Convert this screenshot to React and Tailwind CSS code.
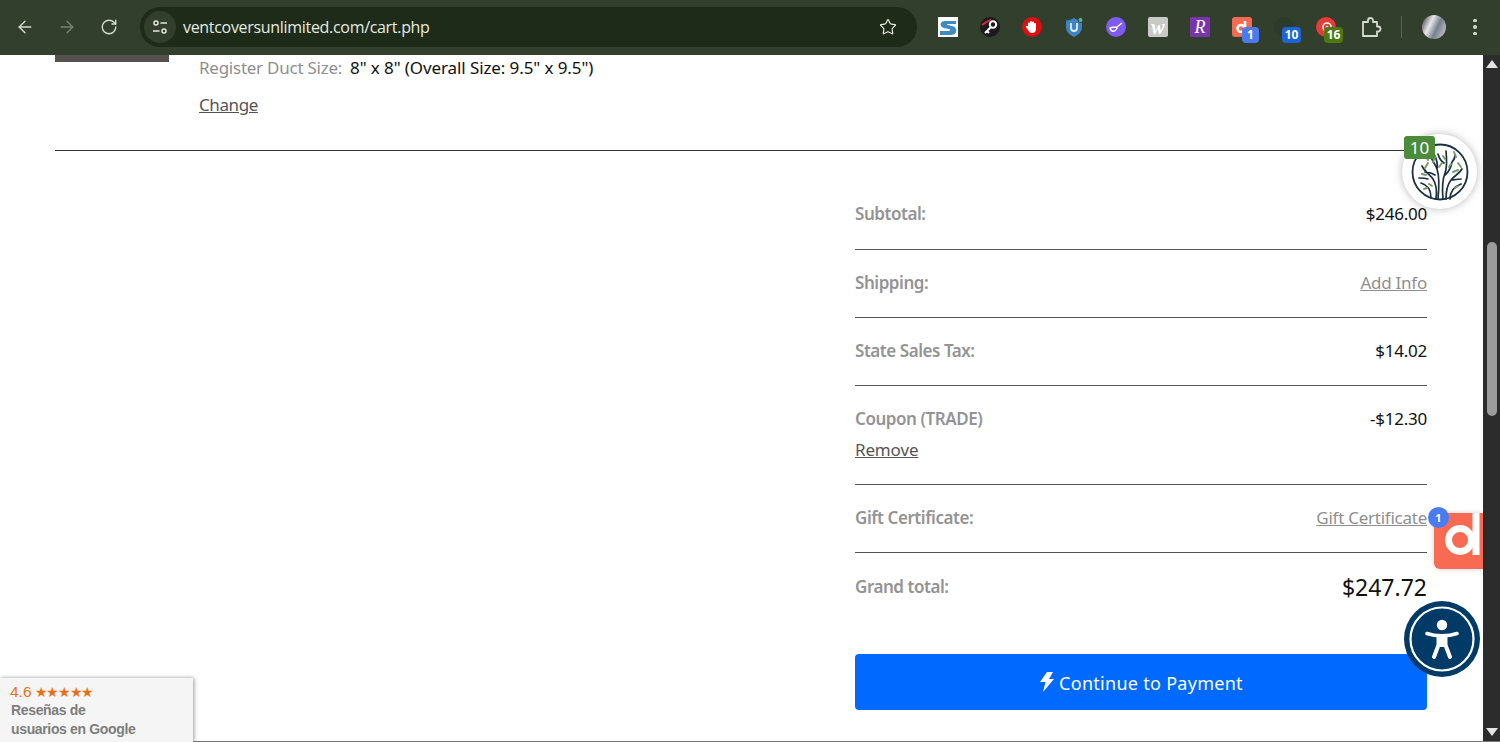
import React from "react";
import { ArrowLeft, ArrowRight, RotateCw, Star } from "lucide-react";

const Badge = ({ children, bg, className }) => (
  <span className={`absolute flex h-[16px] items-center justify-center rounded-[4px] text-[12px] font-bold leading-none text-white ${bg} ${className}`} style={{ fontFamily: "'Open Sans', sans-serif" }}>
    {children}
  </span>
);

function ChromeBar() {
  return (
    <header className="flex h-[55px] shrink-0 items-center bg-[#333f2d] pb-[1px] text-[#dfe5da]" style={{ fontFamily: "'Open Sans', sans-serif" }}>
      <div className="flex w-[140px] shrink-0 items-center gap-[22px] pl-[15px]">
        <ArrowLeft size={20} strokeWidth={1.6} className="text-[#d5dccf]" />
        <ArrowRight size={20} strokeWidth={1.6} className="text-[#79846f]" />
        <RotateCw size={18} strokeWidth={1.8} className="ml-[1px] text-[#d5dccf]" />
      </div>
      <div className="flex h-[40px] w-[777px] shrink-0 items-center rounded-full bg-[#1d2b18] pl-[4px] pr-[20px]">
        <div className="flex h-[32px] w-[32px] items-center justify-center rounded-full bg-[#333f2d]">
          <svg width="18" height="18" viewBox="0 0 18 18" fill="none" stroke="#e2e7dd" strokeWidth="1.5">
            <circle cx="5" cy="5" r="2" />
            <path d="M9.5 5H16M2 13h6.5" />
            <circle cx="13" cy="13" r="2" />
          </svg>
        </div>
        <span className="ml-[7px] flex-1 text-[16px] tracking-[-0.31px] text-[#e6eae2]">ventcoversunlimited.com/cart.php</span>
        <Star size={18} strokeWidth={1.6} className="text-[#e6eae2]" />
      </div>
      <div className="ml-[21px] flex items-center gap-[22px]">
        <svg width="20" height="20" viewBox="0 0 20 20">
          <rect width="20" height="20" fill="#ffffff" />
          <path d="M18 4H7C3 4 2 7 3 9s4 2 8 3c2 .5 1 2-1 2H2v4h11c4 0 6-3 5-6s-4-3-8-4c-2-.5-1-1 1-1h7z" fill="#3f8cc4" />
        </svg>
        <svg width="20" height="20" viewBox="0 0 20 20">
          <circle cx="10" cy="10" r="10" fill="#1b1a1c" />
          <path d="M2 8c3-3 6-4 9-5" stroke="#d0273a" strokeWidth="2" fill="none" />
          <circle cx="13" cy="7.5" r="3.2" fill="none" stroke="#fff" strokeWidth="2" />
          <path d="M11 10l-6 6M7 14l2 2" stroke="#fff" strokeWidth="2" />
        </svg>
        <svg width="20" height="20" viewBox="0 0 20 20">
          <circle cx="10" cy="10" r="10" fill="#e00f0f" />
          <path d="M6 9V6.5a1 1 0 012 0V5a1 1 0 012 0v.5a1 1 0 012 0V7a1 1 0 012 0v5c0 3-2 4-4 4s-3-1-4-3l-2-3c-.5-1 .8-1.800 1.500-1z" fill="#fff" />
        </svg>
        <svg width="20" height="20" viewBox="0 0 20 20">
          <path d="M10 1c2 1.500 5 2.500 8 2.500V10c0 5-4 8-8 10-4-2-8-5-8-10V3.500C5 3.500 8 2.500 10 1z" fill="#3f84c8" />
          <path d="M7 6v5a3 3 0 006 0V6" fill="none" stroke="#dcefff" strokeWidth="1.800" />
          <circle cx="16.500" cy="3" r="2.500" fill="#5ab48c" stroke="#333f2d" />
        </svg>
        <svg width="20" height="20" viewBox="0 0 20 20">
          <circle cx="10" cy="10" r="10" fill="#7f5bf0" />
          <path d="M4 11c2-1 5-1 7-1 0 3-3 5-5 4-1-.5-2-2-2-3zM11 10l5-4" fill="none" stroke="#fff" strokeWidth="1.500" />
        </svg>
        <div className="flex h-[20px] w-[20px] items-center justify-center rounded-[2px] bg-[#c9c9c5] text-[20px] font-bold italic leading-none text-white" style={{ fontFamily: "'Liberation Serif', serif" }}>w</div>
        <div className="flex h-[20px] w-[20px] items-center justify-center rounded-[2px] bg-[#7b35ac] text-[18px] italic leading-none text-white" style={{ fontFamily: "'Liberation Serif', serif" }}>R</div>
        <div className="relative h-[20px] w-[20px]">
          <div className="flex h-[20px] w-[20px] items-center justify-center rounded-[3px] bg-[#f66a52]">
            <svg width="14" height="14" viewBox="0 0 14 14" fill="none" stroke="#fff" strokeWidth="2.600"><circle cx="6" cy="8.500" r="3.500" /><path d="M10 1v11" /></svg>
          </div>
          <Badge bg="bg-[#4a7bf0]" className="left-[10px] top-[10px] w-[17px]">1</Badge>
        </div>
        <div className="relative h-[20px] w-[20px]">
          <div className="h-[20px] w-[20px] rounded-full bg-[#2c3a2b]" />
          <Badge bg="bg-[#1a66d8]" className="left-[8px] top-[10px] w-[19px]">10</Badge>
        </div>
        <div className="relative h-[20px] w-[20px]">
          <svg width="20" height="20" viewBox="0 0 20 20">
            <circle cx="10" cy="10" r="10" fill="#ea3b36" />
            <circle cx="11" cy="10" r="4" fill="none" stroke="#fff" strokeWidth="1.600" />
            <circle cx="11" cy="10" r="1.300" fill="#fff" />
          </svg>
          <Badge bg="bg-[#4d7a0e]" className="left-[8px] top-[10px] w-[19px]">16</Badge>
        </div>
        <svg width="22" height="22" viewBox="0 0 22 22" fill="none" stroke="#d5dccf" strokeWidth="1.800" strokeLinejoin="round" className="ml-[2px]">
          <path d="M3 6h5V4.500a2.500 2.500 0 015 0V6h4v4.500h1a2.500 2.500 0 010 5h-1V20H3z" />
        </svg>
        <div className="-ml-[3px] h-[22px] w-px bg-[#58654f]" />
        <div className="-ml-[2px] h-[24px] w-[24px] rounded-full bg-[linear-gradient(115deg,#2e2e30_0%,#e8e8ea_35%,#77808c_60%,#d8d4d6_100%)]" />
        <div className="flex flex-col gap-[3px] pl-[5px]">
          <span className="h-[3.500px] w-[3.500px] rounded-full bg-[#d5dccf]" />
          <span className="h-[3.500px] w-[3.500px] rounded-full bg-[#d5dccf]" />
          <span className="h-[3.500px] w-[3.500px] rounded-full bg-[#d5dccf]" />
        </div>
      </div>
    </header>
  );
}

function Row({ label, children, className = "border-b border-[#555] pb-[22px] pt-[21px]" }) {
  return (
    <div className={`flex justify-between leading-[24px] ${className}`}>
      <span className="font-semibold tracking-[-0.45px] text-[#949494]">{label}</span>
      {children}
    </div>
  );
}

const GreyLink = ({ children }) => <a className="text-[#8f8f8f] underline">{children}</a>;

function Tree() {
  return (
    <svg width="58" height="58" viewBox="0 0 58 58" fill="none" stroke="#1b3041" strokeWidth="1.700" strokeLinecap="round">
      <circle cx="29" cy="29" r="27.500" strokeWidth="1.800" />
      <path d="M25 56c1-8 1-14-3-20-3-4-8-7-11-13M27 56c1-10 1-24-1-30-1-4-5-8-7-14M32 56c-1-10-1-18 2-26 2-5 2-12 1-22M35 56c0-8 1-14 5-19 3-4 8-6 11-11M20 55c0-7-3-13-10-15M39 56c0-6 3-12 11-15M34 32c4-3 6-8 7-13M24 32c-3-2-6-3-10-3M26 26c1-4 0-9-3-15M40 37c3 0 7-1 10-1M17 36c-3-1-6-1-9-1M33 20c-3-2-5-5-6-9M41 19c2-2 3-4 3-7" />
      <path d="M17 20l-3 5M24 14l-2 5M43 9l2 5M47 20l3 4M11 31l4 1M42 29l5-2M28 24l3-4M21 43l-3-2M15 13l2 4M32 13l2 3M38 24l2-3M44 45l3-2M13 46l3-1" stroke="#7d9a6e" strokeWidth="2" />
    </svg>
  );
}

function Widgets() {
  return (
    <>
      <div className="absolute left-[1402px] top-[134px] flex h-[75px] w-[75px] items-center justify-center rounded-full bg-white shadow-[0_0_8px_rgba(0,0,0,0.28)]">
        <Tree />
      </div>
      <div className="absolute left-[1404px] top-[136px] flex h-[23px] w-[31px] items-center justify-center rounded-[3px] bg-[#4c8b3a] text-[17px] leading-none text-white" style={{ fontFamily: "'Noto Sans', sans-serif" }}>10</div>

      <div className="absolute left-[1434px] top-[513px] h-[56px] w-[49px] overflow-hidden rounded-l-[6px] bg-[#f96a53] shadow-[0_0_5px_rgba(0,0,0,0.2)]">
        <svg width="49" height="56" viewBox="0 0 49 56" fill="none" stroke="#fff" strokeWidth="7">
          <circle cx="26" cy="27" r="11.500" />
          <path d="M42 0v42" />
        </svg>
      </div>
      <div className="absolute left-[1428px] top-[507px] flex h-[21px] w-[21px] items-center justify-center rounded-full bg-[#4a7bf0] text-[11px] font-bold leading-none text-white" style={{ fontFamily: "'Open Sans', sans-serif" }}>1</div>

      <div className="absolute left-[1404px] top-[601px] flex h-[76px] w-[76px] items-center justify-center rounded-full bg-[#003a66]">
        <svg width="76" height="76" viewBox="0 0 76 76" fill="none">
          <circle cx="38" cy="38" r="31.500" stroke="#fff" strokeWidth="2.200" />
          <circle cx="38" cy="24" r="5.200" fill="#fff" />
          <path d="M23 32.500c5 1.800 10 2.300 15 2.300s10-.5 15-2.300" stroke="#fff" strokeWidth="3.600" strokeLinecap="round" />
          <path d="M34.500 35v9L30 56M41.500 35v9L46 56M34.500 44h7" stroke="#fff" strokeWidth="4" strokeLinecap="round" strokeLinejoin="round" />
          <path d="M34 34h8v11h-8z" fill="#fff" />
        </svg>
      </div>

      <div className="absolute bottom-0 left-0 h-[64px] w-[193px] bg-[#f5f5f5] pl-[11px] pt-[5px] shadow-[1px_0_4px_rgba(0,0,0,0.4)]" style={{ fontFamily: "'Liberation Sans', sans-serif" }}>
        <div className="-ml-[1px] flex h-[18px] items-center text-[15.500px] leading-none text-[#e7711b]">
          4.6
          <span className="ml-[3px] text-[14px] tracking-[-1.3px]">★★★★★</span>
        </div>
        <div className="text-[14px] font-bold leading-[19px] tracking-[-0.35px] text-[#7d7d7d]">
          Reseñas de<br />usuarios en Google
        </div>
      </div>
    </>
  );
}

function Scrollbar() {
  return (
    <aside className="flex w-[17px] shrink-0 flex-col items-center bg-[#2c2c2c] py-[5px]">
      <svg width="12" height="8" viewBox="0 0 12 8" fill="#e4e4e4"><path d="M6 0l6 8H0z" /></svg>
      <span className="mt-[174px] h-[174px] w-[10px] rounded-full bg-[#9c9c9c]" />
      <svg width="12" height="8" viewBox="0 0 12 8" fill="#e4e4e4" className="mt-auto"><path d="M0 0h12L6 8z" /></svg>
    </aside>
  );
}

export default function App() {
  return (
    <div className="relative flex h-[742px] w-[1500px] flex-col overflow-hidden bg-white">
      <ChromeBar />
      <div className="flex min-h-0 flex-1 border-b border-[#777]">
        <main className="flex-1 overflow-hidden pl-[55px] pr-[56px] text-[17px] text-[#111]" style={{ fontFamily: "'Noto Sans', sans-serif" }}>
          <div className="flex gap-[30px] border-b border-[#333] pb-[33px]">
            <div className="h-[7px] w-[114px] bg-[#55514f]" />
            <div className="-mt-[1px]">
              <div className="pt-[2px] leading-[24px]">
                <span className="tracking-[-0.25px] text-[#8f8f8f]">Register Duct Size:</span>
                <span className="ml-[8px] tracking-[-0.1px]">8" x 8" (Overall Size: 9.5" x 9.5")</span>
              </div>
              <a className="mt-[13px] block leading-[24px] tracking-[-0.4px] text-[#555] underline">Change</a>
            </div>
          </div>
          <section className="ml-[800px] mt-[29px] tracking-[-0.25px]">
            <Row label="Subtotal:" className="border-b border-[#555] pb-[23px] pt-[22px]"><span>$246.00</span></Row>
            <Row label="Shipping:"><GreyLink>Add Info</GreyLink></Row>
            <Row label="State Sales Tax:"><span>$14.02</span></Row>
            <div className="border-b border-[#555] pb-[22px] pt-[21px] leading-[24px]">
              <div className="flex justify-between">
                <span className="font-semibold tracking-[-0.45px] text-[#949494]">Coupon (TRADE)</span>
                <span>-$12.30</span>
              </div>
              <a className="mt-[7px] block tracking-[-0.15px] text-[#555] underline">Remove</a>
            </div>
            <Row label="Gift Certificate:"><GreyLink>Gift Certificate</GreyLink></Row>
            <Row label="Grand total:" className="pb-[21px] pt-[22px]"><span className="text-[23px] tracking-[0px]">$247.72</span></Row>
            <button className="mt-[34px] flex h-[56px] w-full items-center justify-center gap-[4px] rounded-[4px] bg-[#0069ff] pt-[2px] text-[18px] tracking-[0.28px] text-white">
              <svg width="16" height="20" viewBox="0 0 16 20" fill="#fff" className="-mt-[2px]"><path d="M8 0h6L10 7h5L4 20l2.500-10H1z" /></svg>
              Continue to Payment
            </button>
          </section>
        </main>
        <Scrollbar />
      </div>
      <Widgets />
    </div>
  );
}
